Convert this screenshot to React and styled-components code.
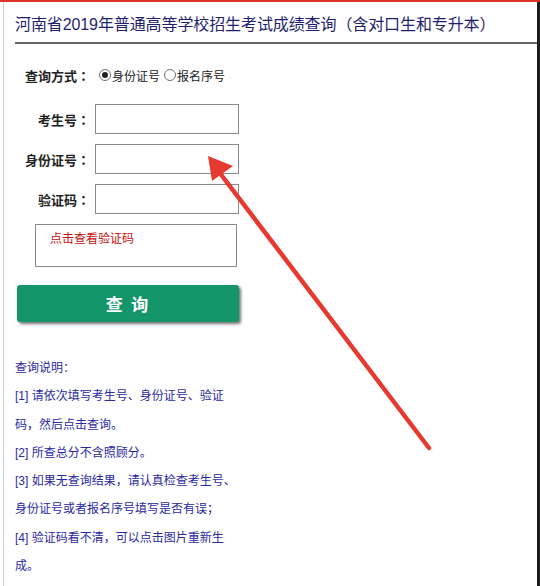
import React from "react";
import styled, { createGlobalStyle } from "styled-components";

const GlobalStyle = createGlobalStyle`
  html, body {
    margin: 0;
    padding: 0;
    background: #fff;
  }
  body {
    font-family: "Liberation Sans", "Noto Sans CJK SC", sans-serif;
  }
`;

const cjk = `"Noto Sans CJK SC", "Liberation Sans", sans-serif`;

const Page = styled.div`
  position: relative;
  width: 540px;
  height: 586px;
  overflow: hidden;
  box-sizing: border-box;
  border-top: 2px solid #d8342c;
`;

const Frame = styled.div`
  margin-left: 3px;
  height: 100%;
  box-sizing: border-box;
  border-left: 1px solid #cfcfcf;
  border-right: 3px solid #1e1e1e;
  padding-left: 11px;
`;

const Title = styled.h1`
  margin: 0;
  padding-top: 11px;
  font-size: 16px;
  line-height: 24px;
  letter-spacing: -0.1px;
  font-weight: normal;
  color: #1f1f6e;
  white-space: nowrap;
`;

const Rule = styled.div`
  height: 2px;
  margin-top: 5px;
  background: #666;
`;

const ModeRow = styled.div`
  display: flex;
  align-items: center;
  height: 20px;
  margin: 21px 0 0 10px;
  font-size: 12px;
  color: #222;
`;

const ModeLabel = styled.span`
  font-family: ${cjk};
  font-size: 13px;
  font-weight: bold;
  margin-right: 9px;
`;

/* centred full-width colon, as in the original page */
const Colon = styled.span`
  font-family: "Noto Sans CJK JP", sans-serif;
`;

const Radio = styled.span`
  position: relative;
  width: 12px;
  height: 12px;
  box-sizing: border-box;
  border: 1px solid #707070;
  border-radius: 50%;
  background: #fff;
  margin-right: 1px;

  &::after {
    content: "";
    display: ${(p) => (p.$checked ? "block" : "none")};
    position: absolute;
    left: 2px;
    top: 2px;
    width: 6px;
    height: 6px;
    border-radius: 50%;
    background: #222;
  }
`;

const RadioText = styled.span`
  margin-right: 4px;
`;

const Form = styled.div`
  margin-top: 19px;
  display: flex;
  flex-direction: column;
  gap: 10px;
`;

const Row = styled.div`
  display: flex;
  align-items: center;
  gap: 5px;
`;

const Label = styled.label`
  width: 75px;
  text-align: right;
  font-family: ${cjk};
  font-size: 13px;
  font-weight: bold;
  color: #222;
`;

const Input = styled.input`
  width: 144px;
  height: 30px;
  box-sizing: border-box;
  border: 1px solid #8a8a8a;
  padding: 0 4px;
  outline: none;
`;

const Captcha = styled.div`
  width: 202px;
  height: 43px;
  box-sizing: border-box;
  margin: 10px 0 0 20px;
  border: 1px solid #8a8a8a;
  padding: 7px 0 0 14px;
  font-size: 12px;
  line-height: 14px;
  color: #c40f0f;
`;

const Button = styled.button`
  display: block;
  width: 222px;
  height: 37px;
  margin: 18px 0 0 2px;
  border: none;
  border-radius: 3px;
  background: #15956a;
  box-shadow: 2px 2px 3px rgba(0, 0, 0, 0.55);
  color: #fff;
  font-family: inherit;
  font-size: 17px;
  font-weight: bold;
  letter-spacing: 2px;
  cursor: pointer;
`;

const Notes = styled.div`
  margin-top: 32px;
  width: 230px;
  font-size: 12px;
  line-height: 28.3px;
  color: #2a2aa0;
`;

const Note = styled.p`
  margin: 0;
  white-space: nowrap;
`;

const Arrow = styled.svg`
  position: absolute;
  left: 0;
  top: 0;
  pointer-events: none;
`;

const notes = [
  ["查询说明："],
  ["[1] 请依次填写考生号、身份证号、验证", "码，然后点击查询。"],
  ["[2] 所查总分不含照顾分。"],
  ["[3] 如果无查询结果，请认真检查考生号、", "身份证号或者报名序号填写是否有误；"],
  ["[4] 验证码看不清，可以点击图片重新生", "成。"],
];

export default function App() {
  return (
    <>
      <GlobalStyle />
      <Page>
        <Frame>
          <Title>河南省2019年普通高等学校招生考试成绩查询（含对口生和专升本）</Title>
          <Rule />

          <ModeRow>
            <ModeLabel>
              查询方式<Colon>：</Colon>
            </ModeLabel>
            <Radio $checked />
            <RadioText>身份证号</RadioText>
            <Radio />
            <RadioText>报名序号</RadioText>
          </ModeRow>

          <Form>
            <Row>
              <Label>
                考生号<Colon>：</Colon>
              </Label>
              <Input />
            </Row>
            <Row>
              <Label>
                身份证号<Colon>：</Colon>
              </Label>
              <Input />
            </Row>
            <Row>
              <Label>
                验证码<Colon>：</Colon>
              </Label>
              <Input />
            </Row>
          </Form>

          <Captcha>点击查看验证码</Captcha>
          <Button>查 询</Button>

          <Notes>
            {notes.map((lines, i) => (
              <Note key={i}>
                {lines.map((line, j) => (
                  <React.Fragment key={j}>
                    {j > 0 && <br />}
                    {line}
                  </React.Fragment>
                ))}
              </Note>
            ))}
          </Notes>
        </Frame>

        <Arrow width="540" height="586" viewBox="0 0 540 586">
          <line
            x1="216"
            y1="166"
            x2="429"
            y2="446"
            stroke="#e63a30"
            strokeWidth="4.5"
            strokeLinecap="round"
          />
          <polygon points="208,154 233,164 212,179" fill="#e63a30" />
        </Arrow>
      </Page>
    </>
  );
}
